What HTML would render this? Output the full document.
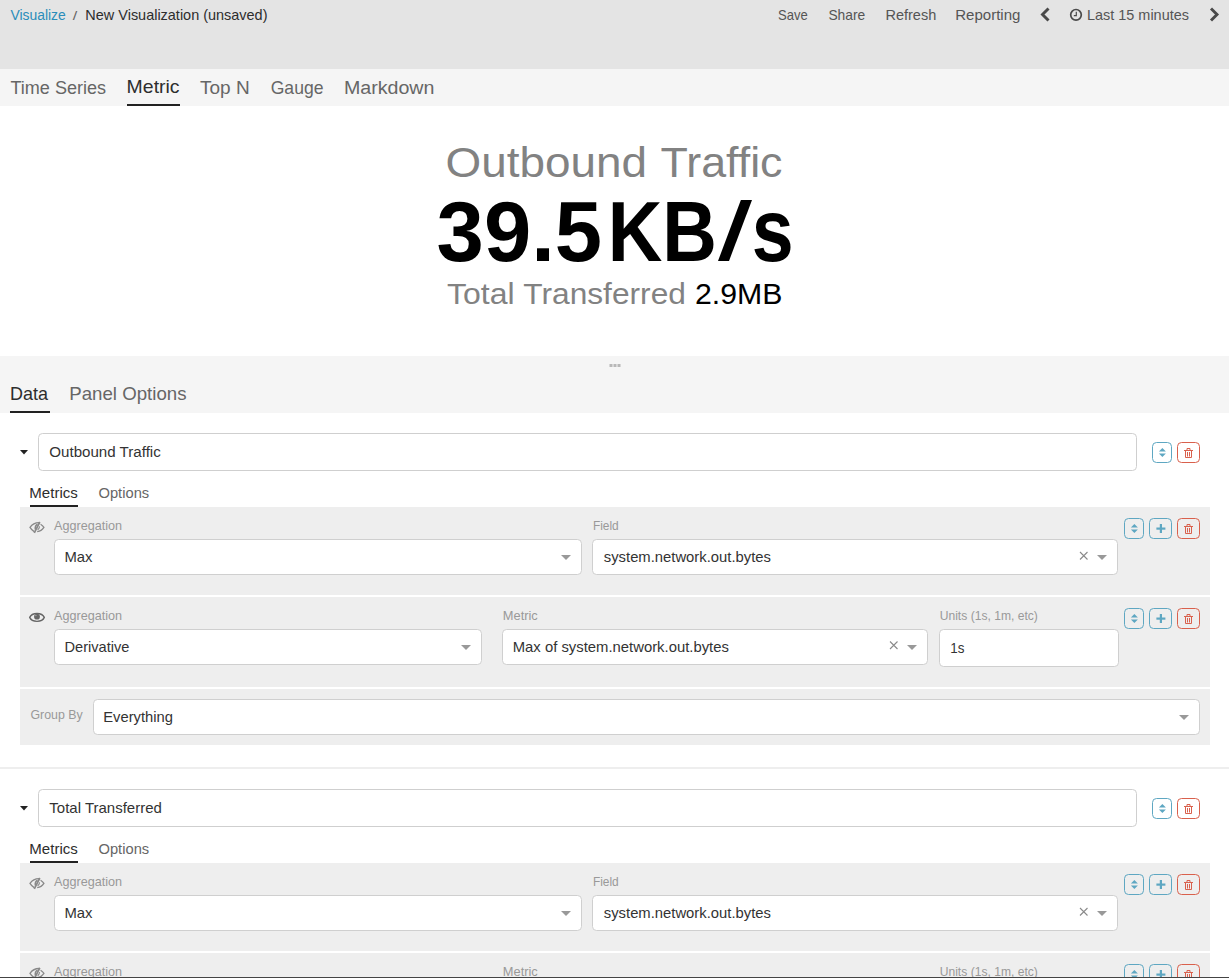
<!DOCTYPE html>
<html><head><meta charset="utf-8"><title>Visualize - New Visualization</title>
<style>
html,body{margin:0;padding:0;background:#fff;width:1229px;height:978px;overflow:hidden}
svg{display:block;font-family:"Liberation Sans", sans-serif}
text{white-space:pre}
</style></head><body>
<svg width="1229" height="978" viewBox="0 0 1229 978">
<rect x="0" y="0" width="1229" height="69" fill="#e4e4e4"/>
<rect x="0" y="69" width="1229" height="37" fill="#f5f5f5"/>
<rect x="0" y="356" width="1229" height="57" fill="#f5f5f5"/>
<rect x="127" y="104" width="53" height="2" fill="#222"/>
<rect x="10" y="411" width="40" height="2" fill="#222"/>
<rect x="609.5" y="364" width="3" height="3" fill="#b8b8b8"/>
<rect x="613.5" y="364" width="3" height="3" fill="#b8b8b8"/>
<rect x="617.5" y="364" width="3" height="3" fill="#b8b8b8"/>
<polygon points="20,450 28,450 24,454.5" fill="#222"/>
<rect x="38.5" y="433.5" width="1098" height="37" rx="4" fill="#fff" stroke="#cfcfcf"/>
<rect x="1152.5" y="442.5" width="19" height="20" rx="4" fill="none" stroke="#5ea7c2"/>
<polygon points="1158.9,451.5 1165.9,451.5 1162.4,448.0" fill="#5ea7c2"/>
<polygon points="1158.9,453.5 1165.9,453.5 1162.4,457.0" fill="#5ea7c2"/>
<rect x="1177.5" y="442.5" width="22" height="20" rx="4" fill="none" stroke="#d9604c"/>
<path d="M1184.0 450.5H1193.0M1187.0 450.5V448.5H1190.0V450.5M1185.5 450.5V457.5H1191.5V450.5M1187.5 452V456.5M1189.5 452V456.5" stroke="#d9604c" stroke-width="1" fill="none"/>
<rect x="30" y="505" width="48" height="2" fill="#222"/>
<rect x="20" y="507" width="1190" height="88" fill="#eeeeee"/>
<path d="M39.6 522.6Q33.5 522.3 30 527.4Q31.8 530.3 34.2 531.6M40.6 524.3Q43 525.8 43.9 527.4Q41.5 531.2 37.2 531.7" fill="none" stroke="#888" stroke-width="1.3"/>
<path d="M39.8 522.0L34.3 532.8" stroke="#888" stroke-width="1.7"/>
<path d="M37.5 524.2Q34.8 525.5 35.3 529.5" fill="none" stroke="#888" stroke-width="1.5"/>
<path d="M39.6 526.3Q39.2 528.8 37.6 529.8" fill="none" stroke="#888" stroke-width="1.1"/>
<rect x="54.5" y="539.5" width="527" height="35" rx="4" fill="#fff" stroke="#cfcfcf"/>
<polygon points="561.0,555 571.0,555 566,560" fill="#999"/>
<rect x="592.5" y="539.5" width="525" height="35" rx="4" fill="#fff" stroke="#cfcfcf"/>
<path d="M1080 552L1087.5 559.5M1087.5 552L1080 559.5" stroke="#8a8a8a" stroke-width="1.1" fill="none"/>
<polygon points="1097.0,555 1107.0,555 1102,560" fill="#999"/>
<rect x="1124.5" y="518.5" width="19" height="20" rx="4" fill="none" stroke="#5ea7c2"/>
<polygon points="1130.9,527.5 1137.9,527.5 1134.4,524.0" fill="#5ea7c2"/>
<polygon points="1130.9,529.5 1137.9,529.5 1134.4,533.0" fill="#5ea7c2"/>
<rect x="1149.5" y="518.5" width="22" height="20" rx="4" fill="none" stroke="#5ea7c2"/>
<rect x="1156.4" y="527.5" width="9" height="2.2" fill="#5ea7c2"/>
<rect x="1159.8000000000002" y="524.0" width="2.2" height="9" fill="#5ea7c2"/>
<rect x="1177.5" y="518.5" width="22" height="20" rx="4" fill="none" stroke="#d9604c"/>
<path d="M1184.0 526.5H1193.0M1187.0 526.5V524.5H1190.0V526.5M1185.5 526.5V533.5H1191.5V526.5M1187.5 528V532.5M1189.5 528V532.5" stroke="#d9604c" stroke-width="1" fill="none"/>
<rect x="20" y="597" width="1190" height="90" fill="#eeeeee"/>
<path d="M29.7 617.4C32 612.13 42 612.13 44.3 617.4C42 622.67 32 622.67 29.7 617.4Z" fill="none" stroke="#666" stroke-width="1.4"/>
<circle cx="37" cy="616.6999999999999" r="2.9" fill="#666"/>
<circle cx="35.9" cy="615.5" r="0.7" fill="#aaa"/>
<rect x="1124.5" y="608.5" width="19" height="20" rx="4" fill="none" stroke="#5ea7c2"/>
<polygon points="1130.9,617.5 1137.9,617.5 1134.4,614.0" fill="#5ea7c2"/>
<polygon points="1130.9,619.5 1137.9,619.5 1134.4,623.0" fill="#5ea7c2"/>
<rect x="1149.5" y="608.5" width="22" height="20" rx="4" fill="none" stroke="#5ea7c2"/>
<rect x="1156.4" y="617.5" width="9" height="2.2" fill="#5ea7c2"/>
<rect x="1159.8000000000002" y="614.0" width="2.2" height="9" fill="#5ea7c2"/>
<rect x="1177.5" y="608.5" width="22" height="20" rx="4" fill="none" stroke="#d9604c"/>
<path d="M1184.0 616.5H1193.0M1187.0 616.5V614.5H1190.0V616.5M1185.5 616.5V623.5H1191.5V616.5M1187.5 618V622.5M1189.5 618V622.5" stroke="#d9604c" stroke-width="1" fill="none"/>
<rect x="54.5" y="629.5" width="427" height="35" rx="4" fill="#fff" stroke="#cfcfcf"/>
<polygon points="461.0,645 471.0,645 466,650" fill="#999"/>
<rect x="502.5" y="629.5" width="425" height="35" rx="4" fill="#fff" stroke="#cfcfcf"/>
<path d="M890 641.5L897.5 649.0M897.5 641.5L890 649.0" stroke="#8a8a8a" stroke-width="1.1" fill="none"/>
<polygon points="907.0,645 917.0,645 912,650" fill="#999"/>
<rect x="939.5" y="629.5" width="179" height="37" rx="4" fill="#fff" stroke="#cfcfcf"/>
<rect x="20" y="689" width="1190" height="56" fill="#eeeeee"/>
<rect x="93.5" y="699.5" width="1106" height="35" rx="4" fill="#fff" stroke="#cfcfcf"/>
<polygon points="1179.0,715 1189.0,715 1184,720" fill="#999"/>
<rect x="0" y="767" width="1229" height="2" fill="#eeeeee"/>
<polygon points="20,806 28,806 24,810.5" fill="#222"/>
<rect x="38.5" y="789.5" width="1098" height="37" rx="4" fill="#fff" stroke="#cfcfcf"/>
<rect x="1152.5" y="798.5" width="19" height="20" rx="4" fill="none" stroke="#5ea7c2"/>
<polygon points="1158.9,807.5 1165.9,807.5 1162.4,804.0" fill="#5ea7c2"/>
<polygon points="1158.9,809.5 1165.9,809.5 1162.4,813.0" fill="#5ea7c2"/>
<rect x="1177.5" y="798.5" width="22" height="20" rx="4" fill="none" stroke="#d9604c"/>
<path d="M1184.0 806.5H1193.0M1187.0 806.5V804.5H1190.0V806.5M1185.5 806.5V813.5H1191.5V806.5M1187.5 808V812.5M1189.5 808V812.5" stroke="#d9604c" stroke-width="1" fill="none"/>
<rect x="30" y="861" width="48" height="2" fill="#222"/>
<rect x="20" y="863" width="1190" height="88" fill="#eeeeee"/>
<path d="M39.6 878.6Q33.5 878.3 30 883.4Q31.8 886.3 34.2 887.6M40.6 880.3Q43 881.8 43.9 883.4Q41.5 887.2 37.2 887.7" fill="none" stroke="#888" stroke-width="1.3"/>
<path d="M39.8 878.0L34.3 888.8" stroke="#888" stroke-width="1.7"/>
<path d="M37.5 880.2Q34.8 881.5 35.3 885.5" fill="none" stroke="#888" stroke-width="1.5"/>
<path d="M39.6 882.3Q39.2 884.8 37.6 885.8" fill="none" stroke="#888" stroke-width="1.1"/>
<rect x="54.5" y="895.5" width="527" height="35" rx="4" fill="#fff" stroke="#cfcfcf"/>
<polygon points="561.0,911 571.0,911 566,916" fill="#999"/>
<rect x="592.5" y="895.5" width="525" height="35" rx="4" fill="#fff" stroke="#cfcfcf"/>
<path d="M1080 908L1087.5 915.5M1087.5 908L1080 915.5" stroke="#8a8a8a" stroke-width="1.1" fill="none"/>
<polygon points="1097.0,911 1107.0,911 1102,916" fill="#999"/>
<rect x="1124.5" y="874.5" width="19" height="20" rx="4" fill="none" stroke="#5ea7c2"/>
<polygon points="1130.9,883.5 1137.9,883.5 1134.4,880.0" fill="#5ea7c2"/>
<polygon points="1130.9,885.5 1137.9,885.5 1134.4,889.0" fill="#5ea7c2"/>
<rect x="1149.5" y="874.5" width="22" height="20" rx="4" fill="none" stroke="#5ea7c2"/>
<rect x="1156.4" y="883.5" width="9" height="2.2" fill="#5ea7c2"/>
<rect x="1159.8000000000002" y="880.0" width="2.2" height="9" fill="#5ea7c2"/>
<rect x="1177.5" y="874.5" width="22" height="20" rx="4" fill="none" stroke="#d9604c"/>
<path d="M1184.0 882.5H1193.0M1187.0 882.5V880.5H1190.0V882.5M1185.5 882.5V889.5H1191.5V882.5M1187.5 884V888.5M1189.5 884V888.5" stroke="#d9604c" stroke-width="1" fill="none"/>
<rect x="20" y="953" width="1190" height="90" fill="#eeeeee"/>
<path d="M39.6 968.5Q33.5 968.1999999999999 30 973.3Q31.8 976.1999999999999 34.2 977.5M40.6 970.1999999999999Q43 971.6999999999999 43.9 973.3Q41.5 977.1 37.2 977.6" fill="none" stroke="#888" stroke-width="1.3"/>
<path d="M39.8 967.9L34.3 978.6999999999999" stroke="#888" stroke-width="1.7"/>
<path d="M37.5 970.1Q34.8 971.4 35.3 975.4" fill="none" stroke="#888" stroke-width="1.5"/>
<path d="M39.6 972.1999999999999Q39.2 974.6999999999999 37.6 975.6999999999999" fill="none" stroke="#888" stroke-width="1.1"/>
<rect x="1124.5" y="964.5" width="19" height="20" rx="4" fill="none" stroke="#5ea7c2"/>
<polygon points="1130.9,973.5 1137.9,973.5 1134.4,970.0" fill="#5ea7c2"/>
<polygon points="1130.9,975.5 1137.9,975.5 1134.4,979.0" fill="#5ea7c2"/>
<rect x="1149.5" y="964.5" width="22" height="20" rx="4" fill="none" stroke="#5ea7c2"/>
<rect x="1156.4" y="973.5" width="9" height="2.2" fill="#5ea7c2"/>
<rect x="1159.8000000000002" y="970.0" width="2.2" height="9" fill="#5ea7c2"/>
<rect x="1177.5" y="964.5" width="22" height="20" rx="4" fill="none" stroke="#d9604c"/>
<path d="M1184.0 972.5H1193.0M1187.0 972.5V970.5H1190.0V972.5M1185.5 972.5V979.5H1191.5V972.5M1187.5 974V978.5M1189.5 974V978.5" stroke="#d9604c" stroke-width="1" fill="none"/>
<path d="M1048.5 8.5L1042.5 14.5L1048.5 20.5" stroke="#4a4a4a" stroke-width="2.9" fill="none"/>
<path d="M1211 8.5L1217 14.5L1211 20.5" stroke="#4a4a4a" stroke-width="2.9" fill="none"/>
<circle cx="1076" cy="14.8" r="5.3" stroke="#4a4a4a" stroke-width="1.7" fill="none"/>
<path d="M1076.3 11.8V15.6H1073.8" stroke="#4a4a4a" stroke-width="1.2" fill="none"/>
<text transform="translate(10.40,20.00) scale(0.9931,1.0000)" font-size="14" font-weight="400" fill="#2a8dba">Visualize</text>
<text transform="translate(72.80,20.00) scale(1.1500,0.9091)" font-size="14" font-weight="400" fill="#666">/</text>
<text transform="translate(85.37,20.00) scale(1.0336,1.0000)" font-size="14" font-weight="400" fill="#2d2d2d">New Visualization (unsaved)</text>
<text transform="translate(778.00,20.00) scale(0.9339,1.0000)" font-size="14" font-weight="400" fill="#555">Save</text>
<text transform="translate(828.40,20.00) scale(0.9874,1.0000)" font-size="14" font-weight="400" fill="#555">Share</text>
<text transform="translate(885.46,20.00) scale(1.0374,1.0000)" font-size="14" font-weight="400" fill="#555">Refresh</text>
<text transform="translate(955.23,20.00) scale(1.0744,1.0000)" font-size="14" font-weight="400" fill="#555">Reporting</text>
<text transform="translate(1086.97,20.00) scale(1.0324,1.0000)" font-size="14" font-weight="400" fill="#555">Last 15 minutes</text>
<text transform="translate(10.40,94.00) scale(1.0047,1.0000)" font-size="18" font-weight="400" fill="#666">Time Series</text>
<text transform="translate(126.62,93.00) scale(1.0813,1.0000)" font-size="18" font-weight="400" fill="#2d2d2d">Metric</text>
<text transform="translate(200.00,94.00) scale(1.0560,1.0000)" font-size="18" font-weight="400" fill="#666">Top N</text>
<text transform="translate(270.70,94.00) scale(0.9772,1.0000)" font-size="18" font-weight="400" fill="#666">Gauge</text>
<text transform="translate(343.91,94.00) scale(1.0911,1.0000)" font-size="18" font-weight="400" fill="#666">Markdown</text>
<text transform="translate(445.47,177.00) scale(1.0672,1.0000)" font-size="43" font-weight="400" fill="#828282">Outbound</text>
<text transform="translate(660.60,177.00) scale(1.0414,1.0000)" font-size="43" font-weight="400" fill="#828282">Traffic</text>
<text transform="translate(436.61,261.00) scale(0.9948,1.0000)" font-size="85.5" font-weight="700" fill="#000">39.5</text>
<text transform="translate(607.68,261.00) scale(0.8846,1.0000)" font-size="85.5" font-weight="700" fill="#000">KB</text>
<text transform="translate(751.86,260.97) scale(0.8810,1.0319)" font-size="85.5" font-weight="700" fill="#000">s</text>
<text transform="translate(447.00,303.60) scale(1.0846,1.0000)" font-size="29.5" font-weight="400" fill="#828282">Total</text>
<text transform="translate(523.30,303.60) scale(1.0742,1.0000)" font-size="29.5" font-weight="400" fill="#828282">Transferred</text>
<text transform="translate(694.97,303.60) scale(1.0265,1.0000)" font-size="29.5" font-weight="400" fill="#000">2.9MB</text>
<text transform="translate(10.00,399.50) scale(0.9997,1.0000)" font-size="18" font-weight="400" fill="#2d2d2d">Data</text>
<text transform="translate(69.26,399.80) scale(1.0377,1.0000)" font-size="18" font-weight="400" fill="#666">Panel Options</text>
<text transform="translate(49.30,457.00) scale(1.0802,1.0000)" font-size="14" font-weight="400" fill="#333">Outbound Traffic</text>
<text transform="translate(29.33,498.00) scale(1.0746,1.0000)" font-size="14" font-weight="400" fill="#2d2d2d">Metrics</text>
<text transform="translate(98.50,498.00) scale(1.0508,1.0000)" font-size="14" font-weight="400" fill="#666">Options</text>
<text transform="translate(54.00,530.00) scale(1.0540,1.0000)" font-size="12" font-weight="400" fill="#999">Aggregation</text>
<text transform="translate(64.44,562.00) scale(1.0610,1.0000)" font-size="14" font-weight="400" fill="#333">Max</text>
<text transform="translate(592.90,530.00) scale(0.9946,1.0000)" font-size="12" font-weight="400" fill="#999">Field</text>
<text transform="translate(603.80,562.00) scale(1.0586,1.0000)" font-size="14" font-weight="400" fill="#333">system.network.out.bytes</text>
<text transform="translate(54.00,620.00) scale(1.0540,1.0000)" font-size="12" font-weight="400" fill="#999">Aggregation</text>
<text transform="translate(502.80,620.00) scale(1.0714,1.0000)" font-size="12" font-weight="400" fill="#999">Metric</text>
<text transform="translate(939.70,620.00) scale(1.0087,1.0000)" font-size="12" font-weight="400" fill="#999">Units (1s, 1m, etc)</text>
<text transform="translate(64.46,652.00) scale(1.0447,1.0000)" font-size="14" font-weight="400" fill="#333">Derivative</text>
<text transform="translate(512.74,652.00) scale(1.0614,1.0000)" font-size="14" font-weight="400" fill="#333">Max of system.network.out.bytes</text>
<text transform="translate(950.24,652.70) scale(0.9575,1.0000)" font-size="14" font-weight="400" fill="#333">1s</text>
<text transform="translate(30.40,719.00) scale(1.0318,1.0000)" font-size="12" font-weight="400" fill="#999">Group By</text>
<text transform="translate(103.24,722.00) scale(1.0550,1.0000)" font-size="14" font-weight="400" fill="#333">Everything</text>
<text transform="translate(49.30,813.00) scale(1.0726,1.0000)" font-size="14" font-weight="400" fill="#333">Total Transferred</text>
<text transform="translate(29.33,854.00) scale(1.0746,1.0000)" font-size="14" font-weight="400" fill="#2d2d2d">Metrics</text>
<text transform="translate(98.50,854.00) scale(1.0508,1.0000)" font-size="14" font-weight="400" fill="#666">Options</text>
<text transform="translate(54.00,886.00) scale(1.0540,1.0000)" font-size="12" font-weight="400" fill="#999">Aggregation</text>
<text transform="translate(64.44,918.00) scale(1.0610,1.0000)" font-size="14" font-weight="400" fill="#333">Max</text>
<text transform="translate(592.90,886.00) scale(0.9946,1.0000)" font-size="12" font-weight="400" fill="#999">Field</text>
<text transform="translate(603.80,918.00) scale(1.0586,1.0000)" font-size="14" font-weight="400" fill="#333">system.network.out.bytes</text>
<text transform="translate(54.00,976.00) scale(1.0540,1.0000)" font-size="12" font-weight="400" fill="#999">Aggregation</text>
<text transform="translate(502.80,976.00) scale(1.0714,1.0000)" font-size="12" font-weight="400" fill="#999">Metric</text>
<text transform="translate(939.70,976.00) scale(1.0087,1.0000)" font-size="12" font-weight="400" fill="#999">Units (1s, 1m, etc)</text>
<polygon points="740.9,200 752,200 729,261 718,261" fill="#000"/>
<rect x="0" y="977" width="1229" height="1" fill="#444"/>
</svg>
</body></html>
